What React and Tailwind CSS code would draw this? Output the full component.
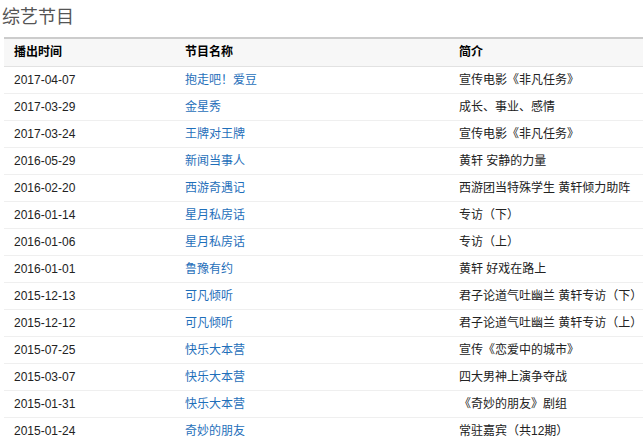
const rows = [
  ['2017-04-07', '抱走吧！爱豆', '宣传电影《非凡任务》'],
  ['2017-03-29', '金星秀', '成长、事业、感情'],
  ['2017-03-24', '王牌对王牌', '宣传电影《非凡任务》'],
  ['2016-05-29', '新闻当事人', '黄轩 安静的力量'],
  ['2016-02-20', '西游奇遇记', '西游团当特殊学生 黄轩倾力助阵'],
  ['2016-01-14', '星月私房话', '专访（下）'],
  ['2016-01-06', '星月私房话', '专访（上）'],
  ['2016-01-01', '鲁豫有约', '黄轩 好戏在路上'],
  ['2015-12-13', '可凡倾听', '君子论道气吐幽兰 黄轩专访（下）'],
  ['2015-12-12', '可凡倾听', '君子论道气吐幽兰 黄轩专访（上）'],
  ['2015-07-25', '快乐大本营', '宣传《恋爱中的城市》'],
  ['2015-03-07', '快乐大本营', '四大男神上演争夺战'],
  ['2015-01-31', '快乐大本营', '《奇妙的朋友》剧组'],
  ['2015-01-24', '奇妙的朋友', '常驻嘉宾（共12期）'],
]

export default function App() {
  return (
    <div className="h-[441px] overflow-hidden bg-white pl-[4px] font-['Arial','Liberation_Sans','Noto_Sans_CJK_SC',sans-serif] text-[12px] text-[#222]">
      <h2 className="ml-[-2px] h-[37px] pt-[5px] text-[18px] leading-[24px] text-[#555]">综艺节目</h2>
      <table className="w-full border-collapse">
        <thead>
          <tr className="h-[28px] border-t-2 border-b border-t-[#ccc] border-b-[#e2e2e2] bg-[#f7f7f7] text-left">
            <th className="w-[171px] pl-[10px] font-bold text-black">播出时间</th>
            <th className="w-[274px] pl-[10px] font-bold text-black">节目名称</th>
            <th className="pl-[10px] font-bold text-black">简介</th>
          </tr>
        </thead>
        <tbody>
          {rows.map((r) => (
            <tr key={r[0] + r[2]} className="h-[27px] border-b border-[#efefef]">
              <td className="pl-[10px]">{r[0]}</td>
              <td className="pl-[10px]">
                <a href="#" className="text-[#1f6fba]">{r[1]}</a>
              </td>
              <td className="pl-[10px]">{r[2]}</td>
            </tr>
          ))}
        </tbody>
      </table>
    </div>
  )
}
